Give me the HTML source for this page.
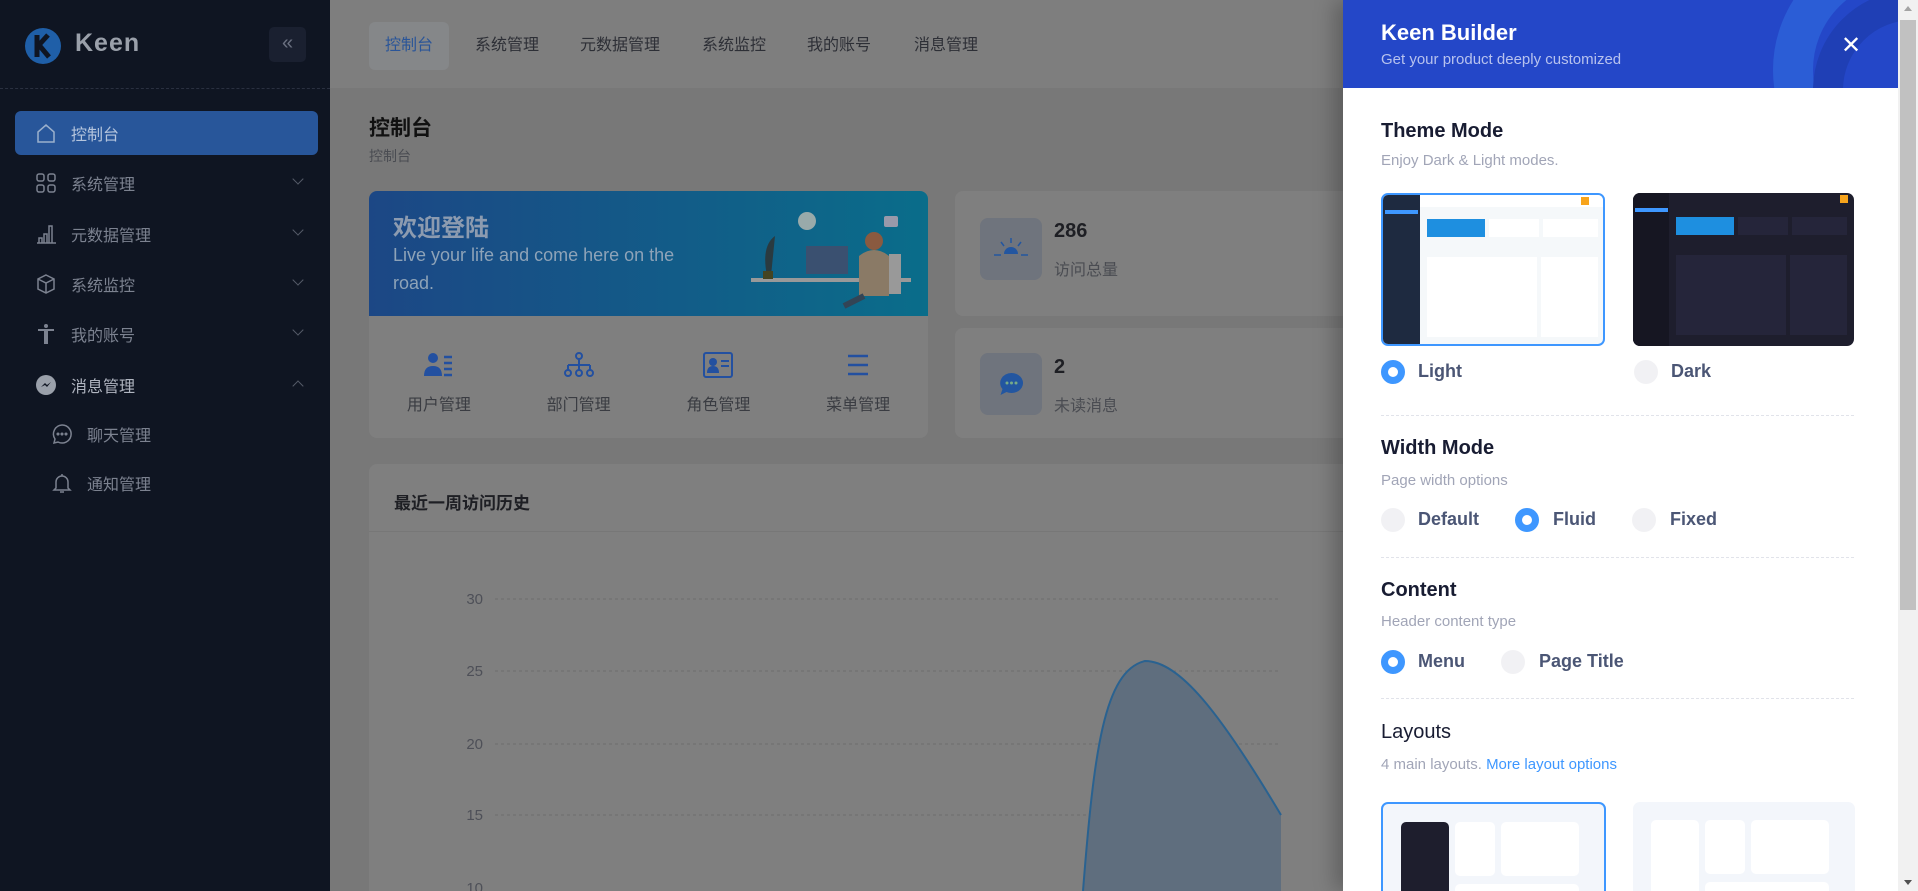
<!DOCTYPE html>
<html style="width:1918px;height:891px;overflow:hidden"><head><meta charset="utf-8"><style>
*{box-sizing:border-box;margin:0;padding:0}
body{width:1918px;height:891px;overflow:hidden;position:relative;background:#787878;font-family:"Liberation Sans","Noto Sans CJK SC",sans-serif}
.abs{position:absolute}
.side{left:0;top:0;width:330px;height:891px;background:#0f1522}
.mi{position:absolute;left:15px;width:303px;height:44px;color:#7c8290;font-size:16px;display:flex;align-items:center;padding-left:56px}
.mi svg{position:absolute;left:20px;top:11px}
.chev{position:absolute;right:16px;top:14px;width:8px;height:8px;border-right:1.5px solid #555b68;border-bottom:1.5px solid #555b68;transform:rotate(45deg)}
.top{left:330px;top:0;width:1013px;height:88px;background:#7e7e7e}
.tab{position:absolute;top:22px;height:48px;line-height:48px;font-size:16px;color:#2d2f36}
.card{background:#7f7f7f;border-radius:8px}
.pn{left:1343px;top:0;width:555px;height:891px;background:#fff;box-shadow:-8px 0 20px rgba(0,0,0,.25)}
.h{position:absolute;left:38px;font-size:20px;font-weight:bold;color:#181c32}
.sub{position:absolute;left:38px;font-size:15px;color:#a1a5b7}
.rd{position:absolute;width:24px;height:24px;border-radius:50%;background:#f1f1f4}
.rd.on{background:#fff;border:7px solid #3e97ff}
.rl{position:absolute;font-size:18px;font-weight:bold;color:#4b5675}
.dv{position:absolute;left:38px;width:473px;border-top:1px dashed #e1e3ea}
</style></head><body>
<div class="abs side">
 <svg class="abs" style="left:24px;top:27px" width="38" height="38" viewBox="0 0 38 38"><circle cx="19" cy="19" r="18" fill="#1f5fa8"/><path d="M13 8v22M14 19l10-11M15 18l10 12" stroke="#0f1522" stroke-width="5" fill="none"/></svg>
 <div class="abs" style="left:75px;top:29px;font-size:25px;font-weight:bold;color:#9aa0aa;letter-spacing:1px">Keen</div>
 <div class="abs" style="left:269px;top:27px;width:37px;height:35px;background:#1a2030;border-radius:5px;color:#6a7080;font-size:20px;text-align:center;line-height:32px">«</div>
 <div class="abs" style="left:0;top:88px;width:330px;border-top:1px dashed #2a3040"></div>
 <div class="mi" style="top:111px;background:#28569a;border-radius:6px;color:#b5c5dd"><svg width="22" height="22" viewBox="0 0 22 22" fill="none" stroke="#9bb0cc" stroke-width="1.5"><path d="M3 10L11 3l8 7v10H3z"/></svg>控制台</div>
 <div class="mi" style="top:161px"><svg width="22" height="22" viewBox="0 0 22 22" fill="none" stroke="#7c8290" stroke-width="1.5"><rect x="2" y="2" width="7" height="7" rx="2"/><rect x="13" y="2" width="7" height="7" rx="2"/><rect x="2" y="13" width="7" height="7" rx="2"/><rect x="13" y="13" width="7" height="7" rx="2"/></svg>系统管理<div class="chev"></div></div>
 <div class="mi" style="top:212px"><svg width="22" height="22" viewBox="0 0 22 22" fill="none" stroke="#7c8290" stroke-width="1.5"><path d="M2 20h19M4 20v-5h3v5M9 20v-9h3v9M14 20V3h3v17"/></svg>元数据管理<div class="chev"></div></div>
 <div class="mi" style="top:262px"><svg width="22" height="22" viewBox="0 0 22 22" fill="none" stroke="#7c8290" stroke-width="1.5"><path d="M11 2l8 4v10l-8 4-8-4V6zM3 6l8 4 8-4M11 10v10"/></svg>系统监控<div class="chev"></div></div>
 <div class="mi" style="top:312px"><svg width="22" height="22" viewBox="0 0 22 22" fill="#7c8290"><circle cx="11" cy="3" r="2"/><path d="M3 6h16v2h-6v13h-2v-6h0v6H9V8H3z"/></svg>我的账号<div class="chev"></div></div>
 <div class="mi" style="top:363px;color:#b0b5c0"><svg width="22" height="22" viewBox="0 0 22 22"><circle cx="11" cy="11" r="10" fill="#9aa0aa"/><path d="M6 13l4-4 2 2 4-3-4 5-2-2z" fill="#0f1522"/></svg>消息管理<div class="chev" style="transform:rotate(-135deg);top:19px"></div></div>
 <div class="mi" style="top:412px;padding-left:72px"><svg style="left:36px" width="22" height="22" viewBox="0 0 22 22" fill="none" stroke="#7c8290" stroke-width="1.5"><path d="M11 2a9 9 0 1 1-4 17l-4 1 1-4A9 9 0 0 1 11 2z"/><circle cx="7" cy="11" r=".8"/><circle cx="11" cy="11" r=".8"/><circle cx="15" cy="11" r=".8"/></svg>聊天管理</div>
 <div class="mi" style="top:461px;padding-left:72px"><svg style="left:36px" width="22" height="22" viewBox="0 0 22 22" fill="none" stroke="#7c8290" stroke-width="1.5"><path d="M5 16V10a6 6 0 0 1 12 0v6l2 2H3zM9 20h4M11 2v2"/></svg>通知管理</div>
</div>
<div class="abs top">
 <div class="tab" style="left:39px;width:80px;background:#858789;border-radius:6px;text-align:center;color:#2a5598">控制台</div>
 <div class="tab" style="left:145px">系统管理</div>
 <div class="tab" style="left:250px">元数据管理</div>
 <div class="tab" style="left:372px">系统监控</div>
 <div class="tab" style="left:477px">我的账号</div>
 <div class="tab" style="left:584px">消息管理</div>
</div>
<div class="abs" style="left:369px;top:112px;font-size:21px;font-weight:bold;color:#111">控制台</div>
<div class="abs" style="left:369px;top:146px;font-size:14px;color:#4a4c52">控制台</div>
<div class="abs card" style="left:369px;top:191px;width:559px;height:247px;overflow:hidden">
 <div class="abs" style="left:0;top:0;width:559px;height:125px;background:linear-gradient(90deg,#1c4785,#0a6d8a)"></div>
 <div class="abs" style="left:24px;top:17px;font-size:24px;font-weight:bold;color:#8c9bb0">欢迎登陆</div>
 <div class="abs" style="left:24px;top:50px;width:320px;font-size:18px;line-height:28px;color:#8ea3b8">Live your life and come here on the road.</div>
 <svg class="abs" style="left:380px;top:15px" width="180" height="110" viewBox="0 0 180 110"><circle cx="58" cy="15" r="9" fill="#9aa"/><rect x="2" y="72" width="160" height="4" fill="#999"/><rect x="57" y="40" width="42" height="28" fill="#3a5070"/><path d="M18 70q-6-30 8-40q-2 20-4 40z" fill="#2a3a40"/><rect x="14" y="65" width="10" height="8" fill="#442"/><circle cx="125" cy="35" r="9" fill="#8a5a40"/><path d="M110 50q15-12 30 0v40h-30z" fill="#8a7a66"/><rect x="140" y="48" width="12" height="40" fill="#999"/><path d="M115 90l-20 10" stroke="#345" stroke-width="6"/><rect x="135" y="10" width="14" height="11" rx="2" fill="#99a"/></svg>
 <div class="abs" style="left:0;top:161px;width:559px;display:flex">
  <div style="flex:1;text-align:center"><svg width="30" height="26" viewBox="0 0 30 26"><circle cx="9" cy="6" r="5" fill="#2350a0"/><path d="M0 24q0-10 9-10t9 10z" fill="#2350a0"/><path d="M20 5h8M20 11h8M20 17h8M20 23h8" stroke="#2350a0" stroke-width="2.5"/></svg><div style="font-size:16px;color:#3a3c42;margin-top:8px">用户管理</div></div>
  <div style="flex:1;text-align:center"><svg width="30" height="26" viewBox="0 0 30 26" fill="none" stroke="#2350a0" stroke-width="2"><circle cx="15" cy="4" r="3"/><path d="M15 7v6M4 13h22M4 13v5M15 13v5M26 13v5"/><circle cx="4" cy="21" r="3"/><circle cx="15" cy="21" r="3"/><circle cx="26" cy="21" r="3"/></svg><div style="font-size:16px;color:#3a3c42;margin-top:8px">部门管理</div></div>
  <div style="flex:1;text-align:center"><svg width="30" height="26" viewBox="0 0 30 26"><rect x="1" y="1" width="28" height="24" rx="2" fill="none" stroke="#2350a0" stroke-width="2"/><circle cx="10" cy="10" r="4" fill="#2350a0"/><path d="M4 21q0-7 6-7t6 7z" fill="#2350a0"/><path d="M18 9h8M18 14h8" stroke="#2350a0" stroke-width="2"/></svg><div style="font-size:16px;color:#3a3c42;margin-top:8px">角色管理</div></div>
  <div style="flex:1;text-align:center"><svg width="30" height="26" viewBox="0 0 30 26"><path d="M5 4h20M5 13h20M5 22h20" stroke="#2350a0" stroke-width="2.5"/></svg><div style="font-size:16px;color:#3a3c42;margin-top:8px">菜单管理</div></div>
 </div>
</div>
<div class="abs card" style="left:955px;top:191px;width:420px;height:125px">
 <div class="abs" style="left:25px;top:27px;width:62px;height:62px;background:#6f747d;border-radius:8px"><svg style="margin:20px 0 0 14px" width="34" height="20" viewBox="0 0 34 20"><path d="M10 16a7 7 0 0 1 14 0z" fill="#2356a0"/><path d="M0 17h7M27 17h7M17 0v5M7 4l3 4M27 4l-3 4" stroke="#2356a0" stroke-width="1.5"/></svg></div>
 <div class="abs" style="left:99px;top:29px;font-size:20px;font-weight:bold;color:#1e1f24">286</div>
 <div class="abs" style="left:99px;top:65px;font-size:16px;color:#4a4c52">访问总量</div>
</div>
<div class="abs card" style="left:955px;top:328px;width:420px;height:110px">
 <div class="abs" style="left:25px;top:25px;width:62px;height:62px;background:#6f747d;border-radius:8px"><svg style="margin:19px 0 0 19px" width="25" height="24" viewBox="0 0 25 24"><path d="M12.5 1a11.5 10 0 1 1-5 19l-6 3 2-6A11.5 10 0 0 1 12.5 1z" fill="#2356a0"/><circle cx="8" cy="11" r="1.5" fill="#7a8"/><circle cx="12.5" cy="11" r="1.5" fill="#7a8"/><circle cx="17" cy="11" r="1.5" fill="#7a8"/></svg></div>
 <div class="abs" style="left:99px;top:28px;font-size:20px;font-weight:bold;color:#1e1f24">2</div>
 <div class="abs" style="left:99px;top:64px;font-size:16px;color:#4a4c52">未读消息</div>
</div>
<div class="abs card" style="left:369px;top:464px;width:1000px;height:440px">
 <div class="abs" style="left:25px;top:25px;font-size:17px;font-weight:bold;color:#1e1f24">最近一周访问历史</div>
 <div class="abs" style="left:0;top:67px;width:1000px;border-top:1px solid #777"></div>
</div>
<svg class="abs" style="left:369px;top:531px" width="980" height="360">
 <g font-family="Liberation Sans" font-size="15" fill="#4e5058" text-anchor="end"><text x="114" y="73">30</text><text x="114" y="145">25</text><text x="114" y="218">20</text><text x="114" y="289">15</text><text x="114" y="362">10</text></g>
 <g stroke="#6e6e6e" stroke-dasharray="3 3"><path d="M126 68H912M126 140H912M126 213H912M126 284H912"/></g>
 <path d="M714 360C725 220 735 140 776 130C810 130 850 180 912 284V360Z" fill="#5f6e7e"/>
 <path d="M714 360C725 220 735 140 776 130C810 130 850 180 912 284" fill="none" stroke="#2a6290" stroke-width="2"/>
</svg>
<div class="abs pn">
 <div class="abs" style="left:0;top:0;width:555px;height:88px;background:#2447c8;overflow:hidden">
  <div class="abs" style="left:430px;top:-60px;width:260px;height:260px;border-radius:50%;border:40px solid #2b5dd6"></div>
  <div class="abs" style="left:470px;top:-10px;width:200px;height:200px;border-radius:50%;border:30px solid #1f3fb5"></div>
  <div class="abs" style="left:38px;top:20px;font-size:22px;font-weight:bold;color:#fff">Keen Builder</div>
  <div class="abs" style="left:38px;top:51px;font-size:15px;color:#b7c2ee">Get your product deeply customized</div>
  <div class="abs" style="left:498px;top:31px;font-size:24px;color:#fff">✕</div>
 </div>
 <div class="h" style="top:120px">Theme Mode</div>
 <div class="sub" style="top:152px">Enjoy Dark &amp; Light modes.</div>
 <div class="abs" style="left:38px;top:193px;width:224px;height:153px;border:2px solid #3e97ff;border-radius:7px;overflow:hidden;background:#f5f8fa">
  <div class="abs" style="left:0;top:0;width:37px;height:153px;background:#1e2a40"></div>
  <div class="abs" style="left:2px;top:15px;width:33px;height:4px;background:#3e97ff"></div>
  <div class="abs" style="left:37px;top:0;width:190px;height:12px;background:#fff"></div>
  <div class="abs" style="left:44px;top:24px;width:58px;height:18px;background:#1e8fe0"></div>
  <div class="abs" style="left:106px;top:24px;width:50px;height:18px;background:#fff"></div>
  <div class="abs" style="left:160px;top:24px;width:55px;height:18px;background:#fff"></div>
  <div class="abs" style="left:44px;top:62px;width:110px;height:80px;background:#fff"></div>
  <div class="abs" style="left:158px;top:62px;width:57px;height:80px;background:#fff"></div>
  <div class="abs" style="left:198px;top:2px;width:8px;height:8px;background:#f7a41c"></div>
 </div>
 <div class="abs" style="left:290px;top:193px;width:221px;height:153px;border-radius:7px;overflow:hidden;background:#1e1e2d">
  <div class="abs" style="left:0;top:0;width:36px;height:153px;background:#161622"></div>
  <div class="abs" style="left:2px;top:15px;width:33px;height:4px;background:#3e97ff"></div>
  <div class="abs" style="left:43px;top:24px;width:58px;height:18px;background:#1e8fe0"></div>
  <div class="abs" style="left:105px;top:24px;width:50px;height:18px;background:#25253a"></div>
  <div class="abs" style="left:159px;top:24px;width:55px;height:18px;background:#25253a"></div>
  <div class="abs" style="left:43px;top:62px;width:110px;height:80px;background:#25253a"></div>
  <div class="abs" style="left:157px;top:62px;width:57px;height:80px;background:#25253a"></div>
  <div class="abs" style="left:207px;top:2px;width:8px;height:8px;background:#f7a41c"></div>
 </div>
 <div class="rd on" style="left:38px;top:360px"></div><div class="rl" style="left:75px;top:361px">Light</div>
 <div class="rd" style="left:291px;top:360px"></div><div class="rl" style="left:328px;top:361px">Dark</div>
 <div class="dv" style="top:415px"></div>
 <div class="h" style="top:437px">Width Mode</div>
 <div class="sub" style="top:472px">Page width options</div>
 <div class="rd" style="left:38px;top:508px"></div><div class="rl" style="left:75px;top:509px">Default</div>
 <div class="rd on" style="left:172px;top:508px"></div><div class="rl" style="left:210px;top:509px">Fluid</div>
 <div class="rd" style="left:289px;top:508px"></div><div class="rl" style="left:327px;top:509px">Fixed</div>
 <div class="dv" style="top:557px"></div>
 <div class="h" style="top:579px">Content</div>
 <div class="sub" style="top:613px">Header content type</div>
 <div class="rd on" style="left:38px;top:650px"></div><div class="rl" style="left:75px;top:651px">Menu</div>
 <div class="rd" style="left:158px;top:650px"></div><div class="rl" style="left:196px;top:651px">Page Title</div>
 <div class="dv" style="top:698px"></div>
 <div class="abs" style="left:38px;top:721px;font-size:20px;color:#181c32">Layouts</div>
 <div class="sub" style="top:756px">4 main layouts. <span style="color:#3e97ff">More layout options</span></div>
 <div class="abs" style="left:38px;top:802px;width:225px;height:100px;border:2px solid #3e97ff;border-radius:7px;background:#f3f6fb">
  <div class="abs" style="left:18px;top:18px;width:48px;height:90px;background:#1e1e2d;border-radius:5px"></div>
  <div class="abs" style="left:72px;top:18px;width:40px;height:54px;background:#fff;border-radius:5px"></div>
  <div class="abs" style="left:118px;top:18px;width:78px;height:54px;background:#fff;border-radius:5px"></div>
  <div class="abs" style="left:72px;top:80px;width:124px;height:30px;background:#fff;border-radius:5px"></div>
 </div>
 <div class="abs" style="left:290px;top:802px;width:222px;height:100px;border-radius:7px;background:#f3f6fb">
  <div class="abs" style="left:18px;top:18px;width:48px;height:90px;background:#fff;border-radius:5px"></div>
  <div class="abs" style="left:72px;top:18px;width:40px;height:54px;background:#fff;border-radius:5px"></div>
  <div class="abs" style="left:118px;top:18px;width:78px;height:54px;background:#fff;border-radius:5px"></div>
  <div class="abs" style="left:72px;top:80px;width:124px;height:30px;background:#fff;border-radius:5px"></div>
 </div>
</div>
<div class="abs" style="left:1898px;top:0;width:20px;height:891px;background:#f1f1f1">
 <div class="abs" style="left:6px;top:6px;border:4px solid transparent;border-bottom:5px solid #a3a3a3;border-top:0"></div>
 <div class="abs" style="left:2px;top:20px;width:16px;height:590px;background:#c1c1c1"></div>
 <div class="abs" style="left:6px;top:880px;border:4px solid transparent;border-top:5px solid #505050;border-bottom:0"></div>
</div>
</body></html>
